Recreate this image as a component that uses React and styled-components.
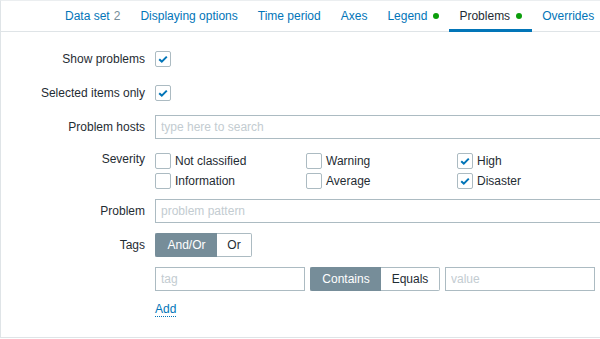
import React from "react";
import styled, { createGlobalStyle } from "styled-components";

const Global = createGlobalStyle`
  html, body { margin: 0; padding: 0; background: #fff; }
  body { font-family: "Liberation Sans", Arial, sans-serif; font-size: 12px; color: #1f2c33; overflow: hidden; }
  * { box-sizing: border-box; }
`;

const Panel = styled.div`
  width: 600px;
  height: 338px;
  border-left: 1px solid #dfe4e7;
  border-top: 1px solid #ebeef0;
  border-bottom: 1px solid #dfe4e7;
  overflow: hidden;
  background: #fff;
`;

const TabBar = styled.div`
  display: flex;
  height: 31px;
  padding-left: 54px;
  border-bottom: 1px solid #dfe4e7;
`;

const Tab = styled.div`
  display: flex;
  align-items: center;
  gap: 4px;
  padding: 0 10px;
  height: 31px;
  margin-bottom: -1px;
  white-space: nowrap;
  color: ${(p) => (p.$active ? "#1f2c33" : "#0275b8")};
  border-bottom: 3px solid ${(p) => (p.$active ? "#0275b8" : "transparent")};
  padding-top: 2px;
`;

const Count = styled.span`
  color: #768d99;
`;

const Dot = styled.span`
  width: 6px;
  height: 6px;
  border-radius: 50%;
  background: #0b9e0b;
  margin-left: 2px;
`;

const Form = styled.div`
  display: grid;
  grid-template-columns: 144px 1fr;
  column-gap: 10px;
  row-gap: 10px;
  padding-top: 15px;
`;

const Label = styled.div`
  text-align: right;
  line-height: 24px;
  white-space: nowrap;
  margin-top: ${(p) => p.$top || 0}px;
`;

const Field = styled.div`
  display: flex;
  align-items: ${(p) => (p.$top ? "flex-start" : "center")};
  min-height: 24px;
  gap: ${(p) => p.$gap || 0}px;
`;

const Box = styled.span`
  width: 16px;
  height: 16px;
  flex: none;
  border: 1px solid #acbbc2;
  border-radius: 2px;
  background: #fff;
  display: inline-flex;
  align-items: center;
  justify-content: center;
  margin-top: ${(p) => p.$shift || 0}px;
`;

const Check = ({ on, shift }) => (
  <Box $shift={shift}>
    {on && (
      <svg width="12" height="12" viewBox="0 0 12 12">
        <path d="M2.2 6.2 L4.8 8.6 L9.8 3.6" fill="none" stroke="#0275b8" strokeWidth="2" />
      </svg>
    )}
  </Box>
);

const Input = styled.input`
  height: 24px;
  width: ${(p) => p.$w || 460}px;
  flex: none;
  border: 1px solid #acbbc2;
  border-radius: 0;
  padding: 0 5px;
  font: inherit;
  color: #1f2c33;
  background: #fff;
  outline: none;
  &::placeholder { color: #c3ccd1; }
`;

const SevGrid = styled.div`
  display: grid;
  grid-template-columns: 151px 151px 151px;
  row-gap: 4px;
  padding-top: 4px;
`;

const SevItem = styled.label`
  display: flex;
  align-items: center;
  gap: 4px;
  height: 16px;
`;

const Segmented = styled.div`
  display: flex;
  height: 24px;
  flex: none;
`;

const Seg = styled.span`
  display: flex;
  align-items: center;
  justify-content: center;
  width: ${(p) => p.$w}px;
  border: 1px solid ${(p) => (p.$on ? "#768d99" : "#acbbc2")};
  background: ${(p) => (p.$on ? "#768d99" : "#fff")};
  color: ${(p) => (p.$on ? "#fff" : "#1f2c33")};
  &:first-child { border-radius: 2px 0 0 2px; border-right: none; }
  &:last-child { border-radius: 0 2px 2px 0; border-left: none; }
`;

const AddLink = styled.span`
  color: #0275b8;
  border-bottom: 1px dotted #0275b8;
  line-height: 14px;
  margin-top: 1px;
`;

const Spacer = styled.div``;

export default function App() {
  const tabs = [
    { t: "Data set", c: "2" },
    { t: "Displaying options" },
    { t: "Time period" },
    { t: "Axes" },
    { t: "Legend", d: true },
    { t: "Problems", d: true, a: true },
    { t: "Overrides" },
  ];
  return (
    <>
      <Global />
      <Panel>
        <TabBar>
          {tabs.map((x) => (
            <Tab key={x.t} $active={x.a}>
              {x.t}
              {x.c && <Count>{x.c}</Count>}
              {x.d && <Dot />}
            </Tab>
          ))}
        </TabBar>
        <Form>
          <Label>Show problems</Label>
          <Field><Check on shift={-1} /></Field>

          <Label>Selected items only</Label>
          <Field><Check on shift={-1} /></Field>

          <Label>Problem hosts</Label>
          <Field><Input placeholder="type here to search" /></Field>

          <Label $top={-2}>Severity</Label>
          <SevGrid>
            <SevItem><Check />Not classified</SevItem>
            <SevItem><Check />Warning</SevItem>
            <SevItem><Check on />High</SevItem>
            <SevItem><Check />Information</SevItem>
            <SevItem><Check />Average</SevItem>
            <SevItem><Check on />Disaster</SevItem>
          </SevGrid>

          <Label>Problem</Label>
          <Field><Input placeholder="problem pattern" /></Field>

          <Label>Tags</Label>
          <Field>
            <Segmented>
              <Seg $on $w={62}>And/Or</Seg>
              <Seg $w={35}>Or</Seg>
            </Segmented>
          </Field>

          <Spacer />
          <Field $gap={5}>
            <Input $w={150} placeholder="tag" />
            <Segmented>
              <Seg $on $w={71}>Contains</Seg>
              <Seg $w={59}>Equals</Seg>
            </Segmented>
            <Input $w={150} placeholder="value" />
          </Field>

          <Spacer />
          <Field $top><AddLink>Add</AddLink></Field>
        </Form>
      </Panel>
    </>
  );
}
